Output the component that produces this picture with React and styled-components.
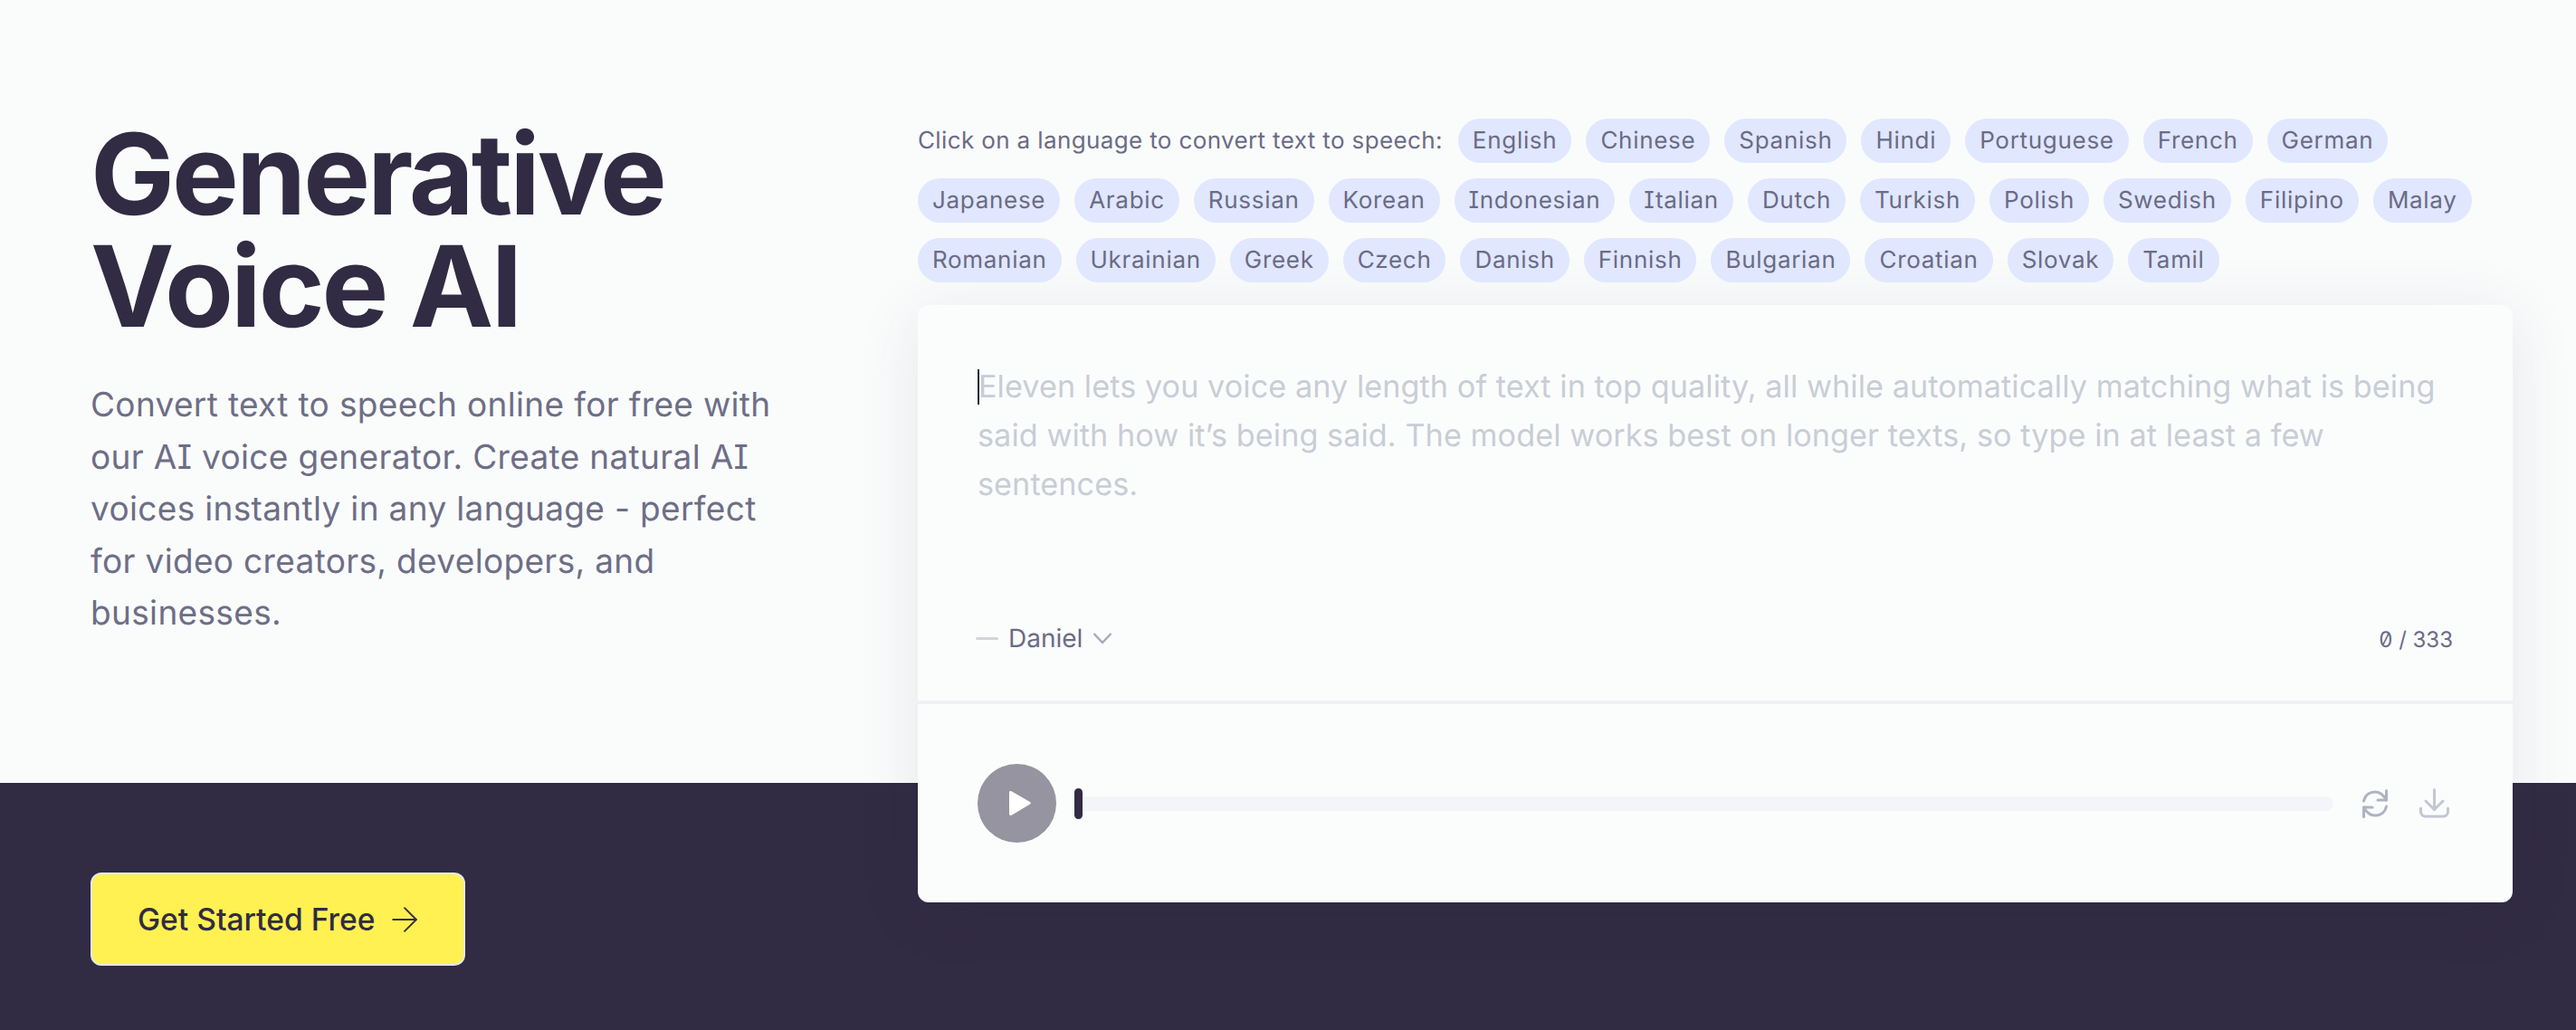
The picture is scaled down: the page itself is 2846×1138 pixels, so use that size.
import React from 'react';
import styled, { createGlobalStyle } from 'styled-components';
import { ArrowRight } from 'lucide-react';

const GlobalStyle = createGlobalStyle`
  html, body {
    margin: 0;
    padding: 0;
    background-color: #fafcfc;
    font-family: Inter, "Liberation Sans", sans-serif;
    text-rendering: geometricPrecision;
  }
`;

const Page = styled.div`
  display: grid;
  grid-template-columns: 1014px 1762px 70px;
  grid-template-rows: 865px 273px;
  width: 2846px;
  height: 1138px;
  overflow: hidden;
`;

const Band = styled.div`
  grid-column: 1 / 4;
  grid-row: 2;
  background-color: #312b43;
`;

const Intro = styled.div`
  grid-column: 1;
  grid-row: 1;
  padding: 130px 0 0 100px;
`;

const Title = styled.h1`
  margin: 0;
  font-size: 124px;
  line-height: 124px;
  font-weight: 700;
  letter-spacing: -3px;
  color: #312b43;
`;

const Lead = styled.p`
  width: 770px;
  margin: 40px 0 0;
  font-size: 37px;
  line-height: 57.6px;
  letter-spacing: 0.34px;
  font-feature-settings: 'cv08';
  color: #6e6e86;
`;

const CtaCell = styled.div`
  grid-column: 1;
  grid-row: 2;
  padding: 99px 0 0 100px;
`;

const CtaButton = styled.button`
  display: flex;
  align-items: center;
  gap: 11px;
  box-sizing: border-box;
  width: 414px;
  height: 103px;
  padding: 0 0 0 50px;
  background-color: #fff152;
  border: 2px solid #e5e7eb;
  border-radius: 12px;
  font-family: inherit;
  font-size: 33.600px;
  font-weight: 500;
  color: #312b43;
`;

const Demo = styled.div`
  grid-column: 2;
  grid-row: 1 / 3;
  padding-top: 131px;
  z-index: 1;
`;

const Languages = styled.div`
  display: flex;
  flex-wrap: wrap;
  align-items: center;
  gap: 17px 16px;
  font-size: 26px;
  font-feature-settings: 'cv08';
  color: #6b6b85;
`;

const LanguagesLabel = styled.span`
  margin-right: 1px;
  line-height: 49px;
  letter-spacing: 0.37px;
`;

const Pill = styled.span`
  height: 49px;
  padding: 0 16px;
  line-height: 49px;
  letter-spacing: 0.7px;
  border-radius: 25px;
  background-color: #e0e7ff;
`;

const Card = styled.div`
  margin-top: 25px;
  height: 660px;
  background-color: #fbfdfd;
  border-radius: 12px;
  box-shadow: 0 10px 70px rgba(49, 43, 67, 0.1);
`;

const Editor = styled.div`
  display: flex;
  flex-direction: column;
  justify-content: space-between;
  box-sizing: border-box;
  height: 441px;
  padding: 64px 66px 48px;
  border-bottom: 4px solid #f0f1f5;
`;

const Placeholder = styled.div`
  font-size: 34.200px;
  line-height: 54px;
  letter-spacing: 0.07px;
  color: #c9cdd6;
`;

const Caret = styled.span`
  display: inline-block;
  width: 2px;
  height: 39px;
  margin-right: -1px;
  vertical-align: -8px;
  background-color: #1f2937;
`;

const EditorFooter = styled.div`
  display: flex;
  align-items: center;
  justify-content: space-between;
  height: 42px;
  margin-left: -2px;
`;

const VoicePicker = styled.div`
  display: flex;
  align-items: center;
  font-size: 28px;
  color: #6b6b85;
`;

const Dash = styled.span`
  width: 25px;
  height: 3px;
  margin-right: 11px;
  border-radius: 2px;
  background-color: #d1d5db;
`;

const Chevron = styled.svg`
  width: 22px;
  height: 14px;
  margin-left: 11px;
  color: #a9abbb;
`;

const Counter = styled.span`
  padding-top: 2px;
  font-size: 24px;
  font-feature-settings: 'ss02';
  color: #6b6b85;
`;

const Player = styled.div`
  display: flex;
  align-items: center;
  height: 219px;
  padding: 0 70px 0 66px;
`;

const PlayButton = styled.div`
  display: flex;
  align-items: center;
  justify-content: center;
  flex: none;
  width: 87px;
  height: 87px;
  border-radius: 50%;
  background-color: #9594a0;
`;

const PlayGlyph = styled.svg`
  width: 24px;
  height: 27px;
  margin-left: 7px;
  fill: #fff;
`;

const Track = styled.div`
  display: flex;
  align-items: center;
  flex: 1;
  height: 34px;
  margin: 0 32px 0 20px;
`;

const Thumb = styled.span`
  width: 9px;
  height: 34px;
  border-radius: 5px;
  background-color: #312b43;
`;

const TrackBar = styled.span`
  flex: 1;
  height: 16px;
  border-radius: 0 8px 8px 0;
  background-color: #f3f5fa;
`;

const Actions = styled.div`
  display: flex;
  align-items: center;
  gap: 35px;
`;

const ActionIcon = styled.svg`
  display: block;
  fill: none;
  stroke: ${(p) => p.$color};
  stroke-width: 3;
  stroke-linecap: round;
  stroke-linejoin: round;
`;

const languages = [
  'English', 'Chinese', 'Spanish', 'Hindi', 'Portuguese', 'French', 'German',
  'Japanese', 'Arabic', 'Russian', 'Korean', 'Indonesian', 'Italian', 'Dutch',
  'Turkish', 'Polish', 'Swedish', 'Filipino', 'Malay', 'Romanian', 'Ukrainian',
  'Greek', 'Czech', 'Danish', 'Finnish', 'Bulgarian', 'Croatian', 'Slovak', 'Tamil',
];

const App = () => (
  <Page>
    <GlobalStyle />
    <Band />
    <Intro>
      <Title>
        Generative
        <br />
        Voice AI
      </Title>
      <Lead>
        Convert text to speech online for free with our AI voice generator.
        Create natural AI voices instantly in any language - perfect for video
        creators, developers, and businesses.
      </Lead>
    </Intro>
    <CtaCell>
      <CtaButton>
        Get Started Free
        <ArrowRight size={44} strokeWidth={1} />
      </CtaButton>
    </CtaCell>
    <Demo>
      <Languages>
        <LanguagesLabel>Click on a language to convert text to speech:</LanguagesLabel>
        {languages.map((name) => (
          <Pill key={name}>{name}</Pill>
        ))}
      </Languages>
      <Card>
        <Editor>
          <Placeholder>
            <Caret />
            Eleven lets you voice any length of text in top quality, all while
            automatically matching what is being said with how it’s being said.
            The model works best on longer texts, so type in at least a few
            sentences.
          </Placeholder>
          <EditorFooter>
            <VoicePicker>
              <Dash />
              Daniel
              <Chevron viewBox="0 0 22 14" fill="none" stroke="currentColor" strokeWidth="2.5">
                <path d="M1.500 2l9.500 10 9.500-10" />
              </Chevron>
            </VoicePicker>
            <Counter>0 / 333</Counter>
          </EditorFooter>
        </Editor>
        <Player>
          <PlayButton>
            <PlayGlyph viewBox="0 0 24 27">
              <path d="M0 2c0-2 1-2.500 3-1.500l20 11.500c1 .6 1 2 0 2.600L3 26.500C1 27.500 0 27 0 25z" />
            </PlayGlyph>
          </PlayButton>
          <Track>
            <Thumb />
            <TrackBar />
          </Track>
          <Actions>
            <ActionIcon $color="#b0b3c2" width="28" height="32" viewBox="0 0 28 32">
              <path d="M26.500 1.500V12H17" />
              <path d="M1.500 13C3 6.500 8 3 14 3c5 0 9.500 3.500 12.500 9" />
              <path d="M1.500 30.500V20H11" />
              <path d="M26.500 19C25 25.500 20 29 14 29c-5 0-9.500-3.500-12.500-9" />
            </ActionIcon>
            <ActionIcon $color="#c4c6d2" width="33" height="33" viewBox="0 0 33 33">
              <path d="M16.500 1.500V23.500" />
              <path d="M7 14l9.500 9.500L26 14" />
              <path d="M1.500 22v4a5 5 0 0 0 5 5h20a5 5 0 0 0 5-5v-4" />
            </ActionIcon>
          </Actions>
        </Player>
      </Card>
    </Demo>
  </Page>
);

export default App;
